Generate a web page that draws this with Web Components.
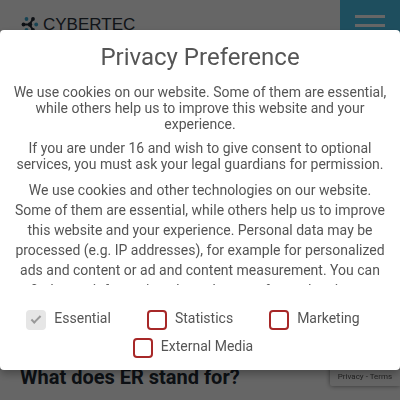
<!DOCTYPE html>
<html lang="en">
<head>
<meta charset="utf-8">
<meta name="viewport" content="width=device-width, initial-scale=1">
<title>CYBERTEC</title>
<style>
  body { margin: 0; background: #fff; font-family: Roboto, "Liberation Sans", sans-serif; overflow: hidden; }
</style>
</head>
<body>
<site-page>
  <site-header slot="header"></site-header>
  <span slot="heading">What does ER stand for?</span>
</site-page>
<captcha-badge></captcha-badge>
<cookie-dialog heading="Privacy Preference">
  <p slot="intro">We use cookies on our website. Some of them are essential, while others help us to improve this website and your experience.</p>
  <p slot="intro">If you are under 16 and wish to give consent to optional services, you must ask your legal guardians for permission.</p>
  <span slot="details">We use cookies and other technologies on our website. Some of them are essential, while others help us to improve this website and your experience. Personal data may be processed (e.g. IP addresses), for example for personalized ads and content or ad and content measurement. You can find more information about the use of your data in our</span>
  <consent-option slot="options" checked disabled>Essential</consent-option>
  <consent-option slot="options">Statistics</consent-option>
  <consent-option slot="options">Marketing</consent-option>
  <consent-option slot="options">External Media</consent-option>
</cookie-dialog>
<script>
const define = (name, html, setup) => customElements.define(name, class extends HTMLElement {
  constructor() {
    super();
    this.attachShadow({ mode: "open" }).innerHTML = html;
  }
  connectedCallback() { if (setup) setup(this, this.shadowRoot); }
});

define("site-header", `
  <style>
    :host { display: flex; justify-content: space-between; height: 60px; background: #fff; }
    a { display: flex; align-items: flex-start; gap: 4px; padding: 15px 20px 0; color: #2b333d; text-decoration: none; font: 17px/19px "Liberation Sans", sans-serif; }
    svg { display: block; width: 19px; height: 19px; }
    button { display: flex; flex-direction: column; gap: 6px; width: 60px; padding: 15px; border: 0; background: #4dc4ec; }
    i { display: block; width: 30px; height: 3px; background: #fff; }
  </style>
  <a href="#"><svg viewBox="0 0 19 19" aria-hidden="true">
    <g stroke="#222a33" stroke-width="2" fill="none"><path d="M3 9.500H9.500L13 4M9.500 9.500L13 15"/></g>
    <g fill="#222a33"><circle cx="3.500" cy="9.500" r="1.900"/><circle cx="13" cy="4" r="1.900"/><circle cx="13" cy="15" r="1.900"/><circle cx="10" cy="9.500" r="2.200"/></g>
    <g fill="#3ba8d0"><circle cx="6.500" cy="4" r="1.900"/><circle cx="16.200" cy="9.500" r="1.900"/><circle cx="6.500" cy="15" r="1.900"/></g>
  </svg><span>CYBERTEC</span></a>
  <button type="button" aria-label="Menu"><i></i><i></i><i></i></button>`);

define("site-page", `
  <style>
    :host { display: flex; flex-direction: column; min-height: 100vh; }
    main { flex: 1; display: flex; flex-direction: column; justify-content: flex-end; padding: 0 20px 11px; }
    h2 { margin: 0; font-size: 20px; line-height: 24px; font-weight: 700; color: #222a33; }
  </style>
  <slot name="header"></slot>
  <main><h2><slot name="heading"></slot></h2></main>`);

define("captcha-badge", `
  <style>
    :host { position: fixed; right: 0; bottom: 14px; width: 70px; height: 60px; box-sizing: border-box;
      display: flex; align-items: flex-end; justify-content: center; padding-bottom: 4px; background: #f9f9f9;
      border-radius: 2px 0 0 2px; box-shadow: 0 0 5px #808080; }
    nav { font-size: 8px; line-height: 10px; color: #555; white-space: nowrap; }
    a { color: inherit; text-decoration: none; }
  </style>
  <nav><a href="#">Privacy</a> - <a href="#">Terms</a></nav>`);

define("consent-option", `
  <style>
    :host { display: block; }
    label { display: flex; gap: 8px; font-size: 14px; line-height: 16px; }
    input { appearance: none; width: 20px; height: 20px; margin: 0; box-sizing: border-box; flex: none;
      border: 2px solid #a72828; border-radius: 4px; background: #fff; display: grid; place-items: center; }
    input:disabled { border-color: #e6e6e6; background: #e6e6e6; }
    input:checked::before { content: ""; width: 8px; height: 3px; margin-bottom: 3px;
      border: solid #999; border-width: 0 0 2px 2px; transform: rotate(-45deg); }
  </style>
  <label><input type="checkbox"><span><slot></slot></span></label>`,
  (host, root) => {
    const box = root.querySelector("input");
    box.checked = host.hasAttribute("checked");
    box.disabled = host.hasAttribute("disabled");
  });

define("cookie-dialog", `
  <style>
    :host { position: fixed; inset: 0; display: flex; align-items: center; justify-content: center; background: rgba(0,0,0,.6); color: #555; }
    section { flex: 1; max-width: 700px; box-sizing: border-box; padding: 12px; background: #fff; border-radius: 4px;
      box-shadow: 0 4px 8px rgba(0,0,0,.3); text-align: center; font-size: 14px; line-height: 16px; }
    h1 { margin: 0 0 12px; font-size: 24px; line-height: 30px; font-weight: 400; }
    ::slotted(p) { margin: 0 0 8px; }
    .details { height: 105px; overflow: hidden; line-height: 20px; }
    form { display: flex; flex-wrap: wrap; justify-content: center; gap: 8px 36px; margin: 0; padding: 25px 14px 0 0; }
  </style>
  <section role="dialog" aria-modal="true" aria-labelledby="title">
    <h1 id="title"></h1>
    <slot name="intro"></slot>
    <div class="details"><slot name="details"></slot></div>
    <form><slot name="options"></slot></form>
  </section>`,
  (host, root) => { root.querySelector("h1").textContent = host.getAttribute("heading"); });
</script>
</body>
</html>
